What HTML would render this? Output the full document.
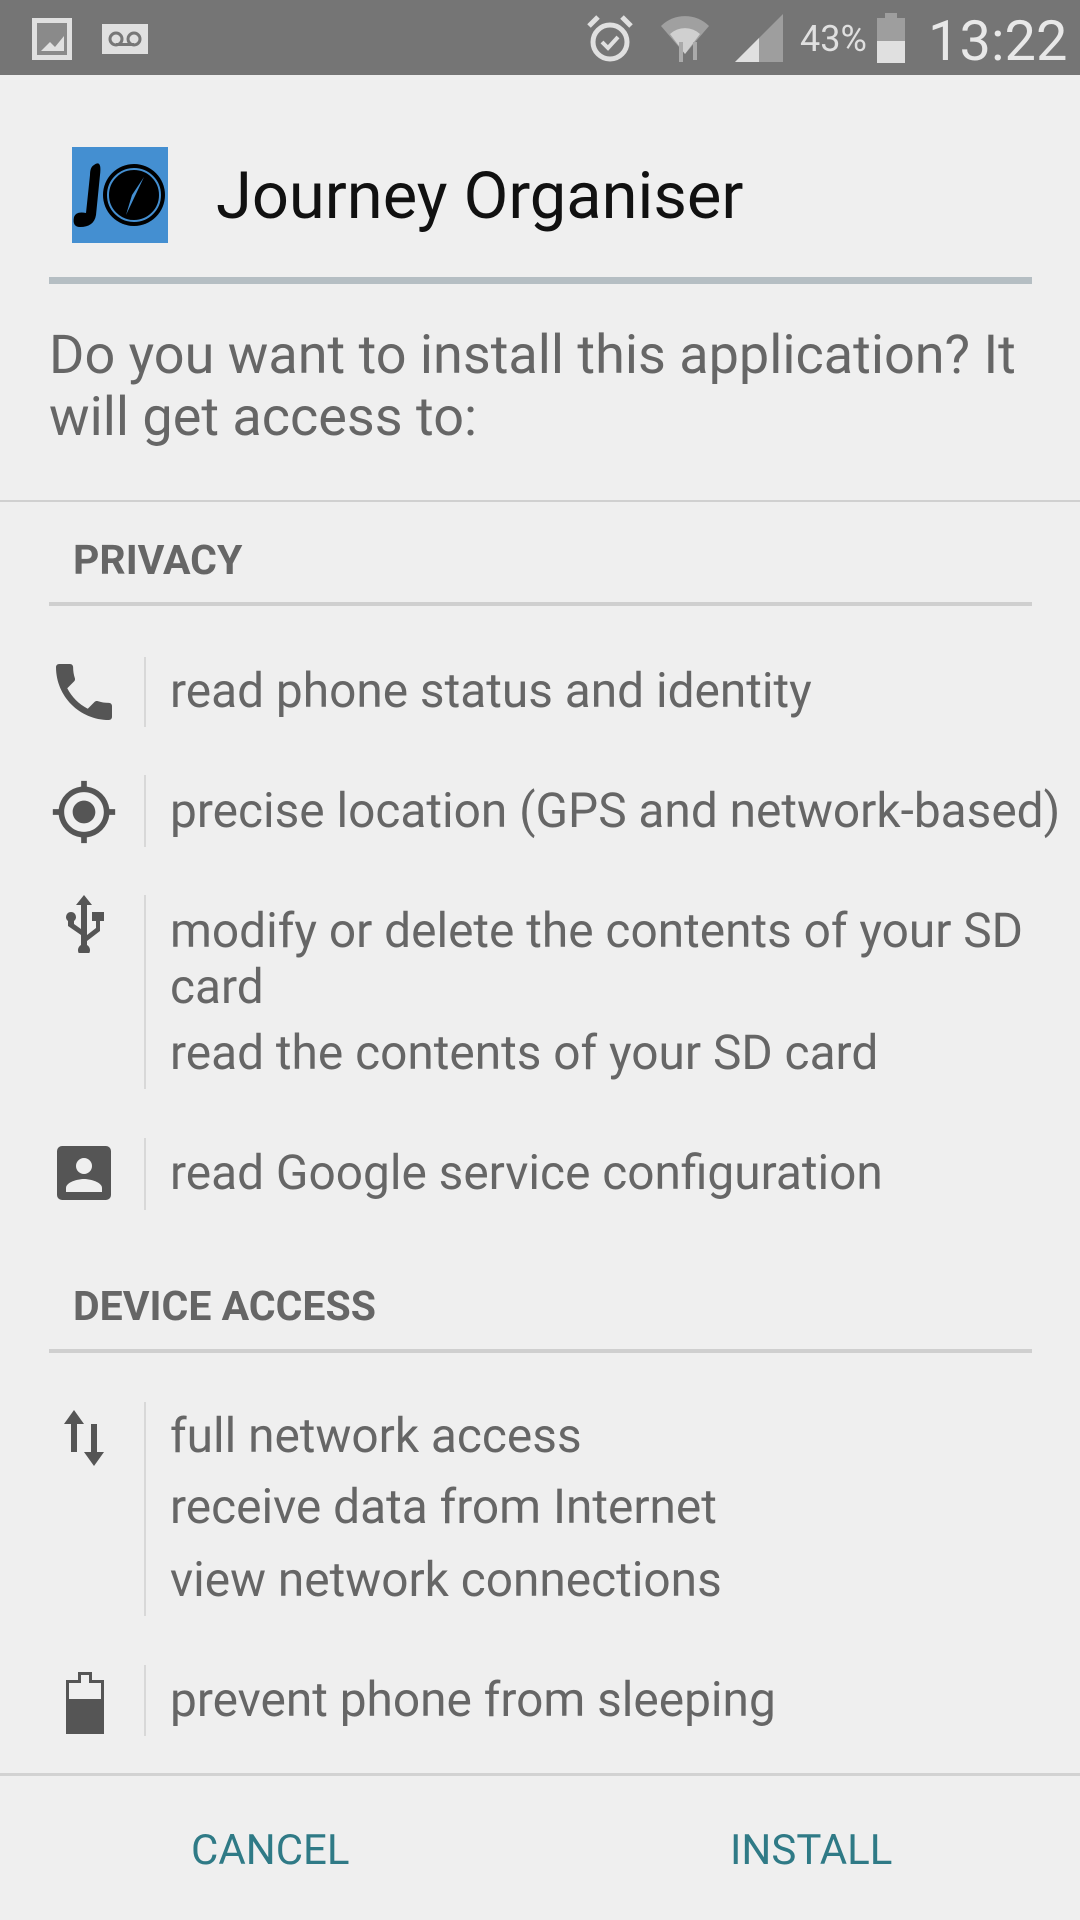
<!DOCTYPE html>
<html><head><meta charset="utf-8"><style>
*{margin:0;padding:0;box-sizing:border-box}
body{width:1080px;height:1920px;background:#efefef;position:relative;overflow:hidden;font-family:"Roboto","Liberation Sans",sans-serif;color:#666}
.a{position:absolute;white-space:nowrap}
.t{font-size:47.8px;left:170px;line-height:56px}
.vl{position:absolute;left:144px;width:2px;background:#d8d8d8}
.hd{font-size:41px;font-weight:bold;left:73px;color:#666}
.hl{position:absolute;left:49px;width:983px;height:4px;background:#cfcfcf}
svg.i{position:absolute;fill:#555}
</style></head><body>
<div class="a" style="left:0;top:0;width:1080px;height:75px;background:#757575"></div>
<svg class="a" style="left:32px;top:18px" width="40" height="42" viewBox="0 0 40 42"><rect width="40" height="42" fill="#e0e0e0"/><rect x="5" y="5" width="30" height="32" fill="#8a8a8a"/><path d="M9 33l9-9 5 5 9-11v15z" fill="#e0e0e0"/></svg>
<svg class="a" style="left:102px;top:24px" width="46" height="30" viewBox="0 0 46 30"><rect width="46" height="30" fill="#e0e0e0"/><circle cx="14" cy="15" r="6" fill="none" stroke="#777" stroke-width="3"/><circle cx="32" cy="15" r="6" fill="none" stroke="#777" stroke-width="3"/><rect x="14" y="19" width="18" height="3" fill="#777"/></svg>
<svg class="a" style="left:586px;top:14px" width="48" height="50" viewBox="0 0 48 50"><circle cx="24" cy="28" r="17" fill="none" stroke="#e0e0e0" stroke-width="5"/><path d="M16 28l6 6 10-11" fill="none" stroke="#e0e0e0" stroke-width="4"/><path d="M3 12l9-9M45 12l-9-9" stroke="#e0e0e0" stroke-width="5"/></svg>
<svg class="a" style="left:660px;top:12px" width="50" height="52" viewBox="0 0 50 52"><path d="M1 14a34 34 0 0 1 48 0l-24 28z" fill="#a0a0a0"/><path d="M10 22a22 22 0 0 1 30 0l-15 20z" fill="#d0d0d0"/><path d="M21 30v20M35 48v-18" stroke="#aaa" stroke-width="4"/></svg>
<svg class="a" style="left:735px;top:14px" width="48" height="48" viewBox="0 0 48 48"><path d="M0 48L48 0v48z" fill="#9e9e9e"/><path d="M0 48l24-24v24z" fill="#e0e0e0"/></svg>
<div class="a" style="left:800px;top:18px;font-size:36px;color:#e0e0e0">43%</div>
<svg class="a" style="left:875px;top:13px" width="32" height="50" viewBox="0 0 32 50"><rect x="10" y="0" width="12" height="6" fill="#9e9e9e"/><rect x="2" y="5" width="28" height="45" fill="#9e9e9e"/><rect x="2" y="28" width="28" height="22" fill="#e0e0e0"/></svg>
<div class="a" style="left:928px;top:8px;font-size:56px;color:#e8e8e8">13:22</div>

<svg class="a" style="left:72px;top:147px" width="96" height="96" viewBox="0 0 96 96"><rect width="96" height="96" fill="#448fd1"/><circle cx="62" cy="48" r="31" fill="#000"/><circle cx="62" cy="48" r="26" fill="none" stroke="#448fd1" stroke-width="2"/><path d="M72 30l-18 38 6-20z" fill="#448fd1"/><path d="M22 18q8-6 6 10l-4 40q-2 12-16 12q-8 0 -6-10 2-6 12-4l4-38q0-8 4-10z" fill="#000"/></svg>
<div class="a" style="left:216px;top:158px;font-size:65px;color:#111">Journey Organiser</div>
<div class="a" style="left:49px;top:277px;width:983px;height:7px;background:#b5bec3"></div>
<div class="a" style="left:49px;top:325px;font-size:54px;line-height:62px;color:#666">Do you want to install this application? It<br>will get access to:</div>
<div class="a" style="left:0;top:500px;width:1080px;height:2px;background:#d0d0d0"></div>

<div class="a hd" style="top:537px">PRIVACY</div>
<div class="hl" style="top:602px"></div>

<svg class="i" style="left:56px;top:664px" width="56" height="56" viewBox="3 3 18 18"><path d="M6.62 10.79c1.44 2.83 3.760 5.14 6.59 6.59l2.2-2.2c.27-.27.67-.36 1.020-.24 1.12.37 2.33.57 3.57.57.55 0 1 .45 1 1V20c0 .55-.45 1-1 1-9.39 0-17-7.61-17-17 0-.55.45-1 1-1h3.5c.55 0 1 .45 1 1 0 1.25.2 2.45.57 3.57.11.35.03.74-.25 1.020l-2.2 2.2z"/></svg>
<div class="vl" style="top:657px;height:70px"></div>
<div class="a t" style="top:663px">read phone status and identity</div>

<svg class="i" style="left:50px;top:778px" width="68" height="68" viewBox="0 0 24 24"><path d="M12 8c-2.21 0-4 1.79-4 4s1.79 4 4 4 4-1.79 4-4-1.79-4-4-4zm8.94 3A8.994 8.994 0 0 0 13 3.06V1h-2v2.06A8.994 8.994 0 0 0 3.06 11H1v2h2.06A8.994 8.994 0 0 0 11 20.94V23h2v-2.06A8.994 8.994 0 0 0 20.94 13H23v-2h-2.06zM12 19c-3.87 0-7-3.13-7-7s3.13-7 7-7 7 3.13 7 7-3.13 7-7 7z"/></svg>
<div class="vl" style="top:775px;height:72px"></div>
<div class="a t" style="top:783px">precise location (GPS and network-based)</div>

<svg class="i" style="left:58px;top:895px" width="52" height="58" viewBox="0 0 52 58"><path d="M26 0l8 10h-5v30l9-7v-7h-4v-9h12v9h-4v10l-13 10v4a6 6 0 1 1-6 0v-10l-13-9v-5a5 5 0 1 1 6 0v3l7 5v-24h-5z"/></svg>
<div class="vl" style="top:895px;height:194px"></div>
<div class="a t" style="top:903px">modify or delete the contents of your SD<br>card</div>
<div class="a t" style="top:1025px">read the contents of your SD card</div>

<svg class="i" style="left:57px;top:1146px" width="54" height="54" viewBox="0 0 54 54"><rect width="54" height="54" rx="5"/><circle cx="27" cy="20" r="8" fill="#efefef"/><path d="M9 46v-4c0-6 12-9 18-9s18 3 18 9v4z" fill="#efefef"/></svg>
<div class="vl" style="top:1138px;height:72px"></div>
<div class="a t" style="top:1145px">read Google service configuration</div>

<div class="a hd" style="top:1283px">DEVICE ACCESS</div>
<div class="hl" style="top:1349px"></div>

<svg class="i" style="left:62px;top:1410px" width="44" height="56" viewBox="0 0 44 56"><path d="M12 0l10 14h-7v28h-6v-28h-7z"/><path d="M32 56l10-14h-7v-28h-6v28h-7z"/></svg>
<div class="vl" style="top:1402px;height:214px"></div>
<div class="a t" style="top:1408px">full network access</div>
<div class="a t" style="top:1479px">receive data from Internet</div>
<div class="a t" style="top:1552px">view network connections</div>

<svg class="i" style="left:66px;top:1672px" width="38" height="62" viewBox="0 0 38 62"><path d="M12 0h14v8h12v54h-38v-54h12z"/><path d="M15 3h8v8h12v16h-32v-16h12z" fill="#efefef"/></svg>
<div class="vl" style="top:1665px;height:71px"></div>
<div class="a t" style="top:1672px">prevent phone from sleeping</div>

<div class="a" style="left:0;top:1773px;width:1080px;height:3px;background:#d2d2d2"></div>
<div class="a" style="left:191px;top:1826px;font-size:42px;color:#2f7a86">CANCEL</div>
<div class="a" style="left:730px;top:1826px;font-size:42px;color:#2f7a86">INSTALL</div>
</body></html>
